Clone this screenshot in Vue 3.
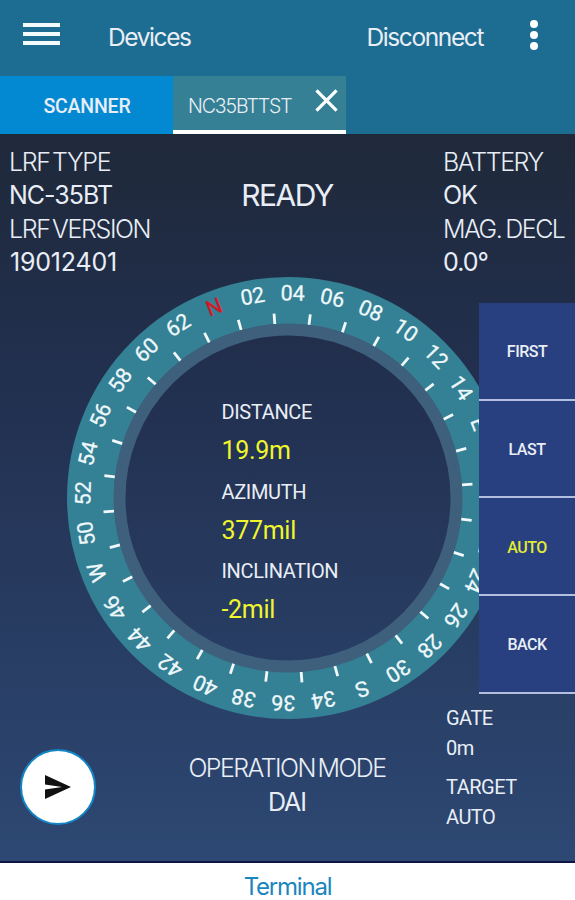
<template>
  <div class="app">
    <header class="toolbar">
      <button class="icon-btn menu" aria-label="Menu">
        <span></span><span></span><span></span>
      </button>
      <div class="title">Devices</div>
      <div class="disconnect">Disconnect</div>
      <button class="icon-btn more" aria-label="More">
        <i></i><i></i><i></i>
      </button>
    </header>

    <nav class="tabs">
      <div class="tab scanner">SCANNER</div>
      <div class="tab device">
        <span class="device-name">NC35BTTST</span>
        <svg class="close" viewBox="0 0 24 24">
          <path d="M1.5 1.5 L22.5 22.5 M22.5 1.5 L1.5 22.5" />
        </svg>
      </div>
    </nav>

    <main class="screen">
      <section class="info">
        <div class="info-col left">
          <div class="label">LRF TYPE</div>
          <div class="value">NC-35BT</div>
          <div class="label">LRF VERSION</div>
          <div class="value serial">19012401</div>
        </div>
        <div class="status">READY</div>
        <div class="info-col right">
          <div class="label">BATTERY</div>
          <div class="value">OK</div>
          <div class="label decl">MAG. DECL</div>
          <div class="value">0.0°</div>
        </div>
      </section>

      <section class="stage">
        <div class="dial">
          <svg class="compass" viewBox="-222 -222 444 444">
            <circle class="ring" r="197.5" />
            <circle class="ring-inner" r="168.5" />
            <g v-for="mark in marks" :key="mark.text">
              <text
                :class="['mark', { north: mark.text === 'N' }]"
                :transform="`rotate(${mark.angle})`"
                y="-197.5"
              >{{ mark.text }}</text>
              <line
                class="tick"
                :transform="`rotate(${mark.angle + STEP / 2})`"
                y1="-185"
                y2="-174.5"
              />
            </g>
          </svg>
          <dl class="readings">
            <template v-for="item in readings" :key="item.label">
              <dt>{{ item.label }}</dt>
              <dd>{{ item.value }}</dd>
            </template>
          </dl>
        </div>

        <div class="bottom">
          <button class="send" aria-label="Send">
            <svg viewBox="0 0 26 24">
              <path d="M0 0 L26 12 L0 24 V14.5 L17 12 L0 9.5 Z" />
            </svg>
          </button>
          <div class="operation">
            <div class="operation-label">OPERATION MODE</div>
            <div class="operation-value">DAI</div>
          </div>
        </div>

        <aside class="side">
          <button
            v-for="target in targets"
            :key="target"
            :class="['target-btn', { active: target === selected }]"
          >{{ target }}</button>
          <div class="settings">
            <div>GATE</div>
            <div>0m</div>
            <div class="target-label">TARGET</div>
            <div>AUTO</div>
          </div>
        </aside>
      </section>
    </main>

    <footer class="terminal">Terminal</footer>
  </div>
</template>

<script setup>
import { computed, ref } from 'vue';

const STEP = 360 / 32;
const MILS = 6400;

const azimuth = ref(377);
const selected = ref('AUTO');
const targets = ['FIRST', 'LAST', 'AUTO', 'BACK'];

const readings = computed(() => [
  { label: 'DISTANCE', value: '19.9m' },
  { label: 'AZIMUTH', value: `${azimuth.value}mil` },
  { label: 'INCLINATION', value: '-2mil' }
]);

const cardinals = { 0: 'N', 16: 'E', 32: 'S', 48: 'W' };

// One mark every 200 mils, the dial turns against the azimuth
const marks = computed(() =>
  Array.from({ length: 32 }, (_, i) => ({
    text: cardinals[i * 2] || String(i * 2).padStart(2, '0'),
    angle: i * STEP - (azimuth.value / MILS) * 360
  }))
);
</script>

<style>
body {
  margin: 0;
}
</style>

<style scoped>
.app {
  display: flex;
  flex-direction: column;
  width: 575px;
  height: 900px;
  overflow: hidden;
  font-family: Inter, Roboto, sans-serif;
  color: #e9eef6;
  white-space: nowrap;
}
button {
  padding: 0;
  border: 0;
  background: none;
  font: inherit;
  color: inherit;
}
.toolbar {
  display: flex;
  flex-shrink: 0;
  align-items: center;
  box-sizing: border-box;
  height: 76px;
  padding: 0 37px 2px 23px;
  background: #1d6c91;
  font-size: 24.5px;
  letter-spacing: -1.4px;
}
.icon-btn {
  display: flex;
  flex-direction: column;
}
.menu {
  gap: 5px;
  width: 37px;
  margin-right: 48px;
  margin-top: -6px;
}
.menu span {
  height: 4px;
  background: #f4fbff;
}
.disconnect {
  margin-left: auto;
  margin-right: 47px;
  letter-spacing: -1.4px;
}
.more {
  gap: 3px;
  margin-top: -4px;
}
.more i {
  width: 8px;
  height: 8px;
  border-radius: 50%;
  background: #fff;
}
.tabs {
  display: flex;
  flex-shrink: 0;
  height: 58px;
  background: #1d6c91;
}
.tab {
  display: flex;
  align-items: center;
  box-sizing: border-box;
}
.scanner {
  justify-content: center;
  width: 173px;
  padding: 3px 0 0 1px;
  background: #0389d2;
  font: 500 19.5px Roboto, sans-serif;
  letter-spacing: -0.2px;
}
.device {
  justify-content: space-between;
  width: 173px;
  padding: 6px 8px 0 15px;
  border-bottom: 4px solid #fff;
  background: #358094;
  font-size: 19.5px;
  font-weight: 300;
}
.device-name {
  letter-spacing: -1.1px;
}
.close {
  width: 23px;
  height: 23px;
  margin-top: -11px;
  fill: none;
  stroke: #fff;
  stroke-width: 3.4;
}
.screen {
  display: flex;
  flex-direction: column;
  flex-shrink: 0;
  box-sizing: border-box;
  height: 729px;
  border-bottom: 2px solid #0d1545;
  background: linear-gradient(#1f293a, #223050 35%, #2d4873);
}
.info {
  display: grid;
  grid-template-columns: 192px 172px 1fr;
  box-sizing: border-box;
  height: 143px;
  padding: 12px 0 0 9px;
  font-size: 25px;
  line-height: 33.3px;
}
.info-col.right {
  padding-left: 70px;
}
.label {
  font-weight: 300;
  letter-spacing: -1.4px;
  word-spacing: -3px;
}
.decl {
  letter-spacing: -1.5px;
  word-spacing: -1.5px;
}
.value {
  letter-spacing: -1px;
}
.serial {
  padding-left: 1px;
  letter-spacing: -0.2px;
}
.status {
  padding-top: 32.5px;
  text-align: center;
  font-size: 30px;
  letter-spacing: -1.5px;
}
.stage {
  display: grid;
  flex: 1;
  grid-template: 1fr / 1fr;
}
.dial,
.bottom,
.side {
  grid-area: 1 / 1;
}
.dial {
  display: grid;
  align-self: start;
  justify-self: start;
  margin-left: 66px;
  margin-top: -0.6px;
}
.compass,
.readings {
  grid-area: 1 / 1;
}
.compass {
  width: 444px;
  height: 444px;
}
.ring {
  fill: none;
  stroke: #348094;
  stroke-width: 47;
}
.ring-inner {
  fill: none;
  stroke: #3f607c;
  stroke-width: 12;
}
.mark {
  fill: #eef8fb;
  stroke: #eef8fb;
  stroke-width: 0.3;
  font: 400 21.5px Roboto, sans-serif;
  text-anchor: middle;
}
.mark.north {
  fill: #dc1420;
  stroke: #dc1420;
}
.tick {
  stroke: #f2f8fb;
  stroke-width: 2.8;
}
.readings {
  margin: 120px 0 0 155.5px;
  font-family: Roboto, sans-serif;
}
.readings dt {
  height: 32px;
  font-size: 20px;
  line-height: 32px;
  letter-spacing: -0.35px;
}
.readings dd {
  height: 47.4px;
  margin: 0;
  color: #f0f62c;
  font-size: 25px;
  line-height: 45px;
  letter-spacing: -0.3px;
}
.bottom {
  display: flex;
  align-self: end;
  align-items: center;
  height: 148px;
  padding-left: 20px;
}
.send {
  display: flex;
  align-items: center;
  justify-content: center;
  box-sizing: border-box;
  width: 76px;
  height: 76px;
  border: 2px solid #1485c4;
  border-radius: 50%;
  background: #fff;
}
.send svg {
  width: 26px;
  height: 24px;
  fill: #111;
}
.operation {
  width: 200px;
  margin-left: 91px;
  margin-top: -5px;
  text-align: center;
  font-size: 25px;
  line-height: 34px;
}
.operation-label {
  font-weight: 300;
  letter-spacing: -1.55px;
  word-spacing: -3px;
}
.operation-value {
  letter-spacing: -1px;
}
.side {
  display: flex;
  flex-direction: column;
  justify-self: end;
  width: 96px;
  padding-top: 26px;
  font-family: Roboto, sans-serif;
}
.target-btn {
  box-sizing: border-box;
  height: 97.7px;
  padding-top: 2px;
  border-bottom: 2px solid #b4bede;
  background: #284080;
  font-size: 16px;
  font-weight: 500;
  letter-spacing: -0.5px;
}
.target-btn.active {
  color: #e3ea35;
}
.settings {
  margin: 9.5px 0 0 -33px;
  font-size: 20px;
  line-height: 30px;
  letter-spacing: -0.5px;
}
.target-label {
  margin-top: 9px;
}
.terminal {
  box-sizing: border-box;
  height: 37px;
  padding-top: 10px;
  background: #fff;
  color: #1a86bd;
  font-size: 24px;
  line-height: 27px;
  letter-spacing: -1.2px;
  text-align: center;
}
</style>
